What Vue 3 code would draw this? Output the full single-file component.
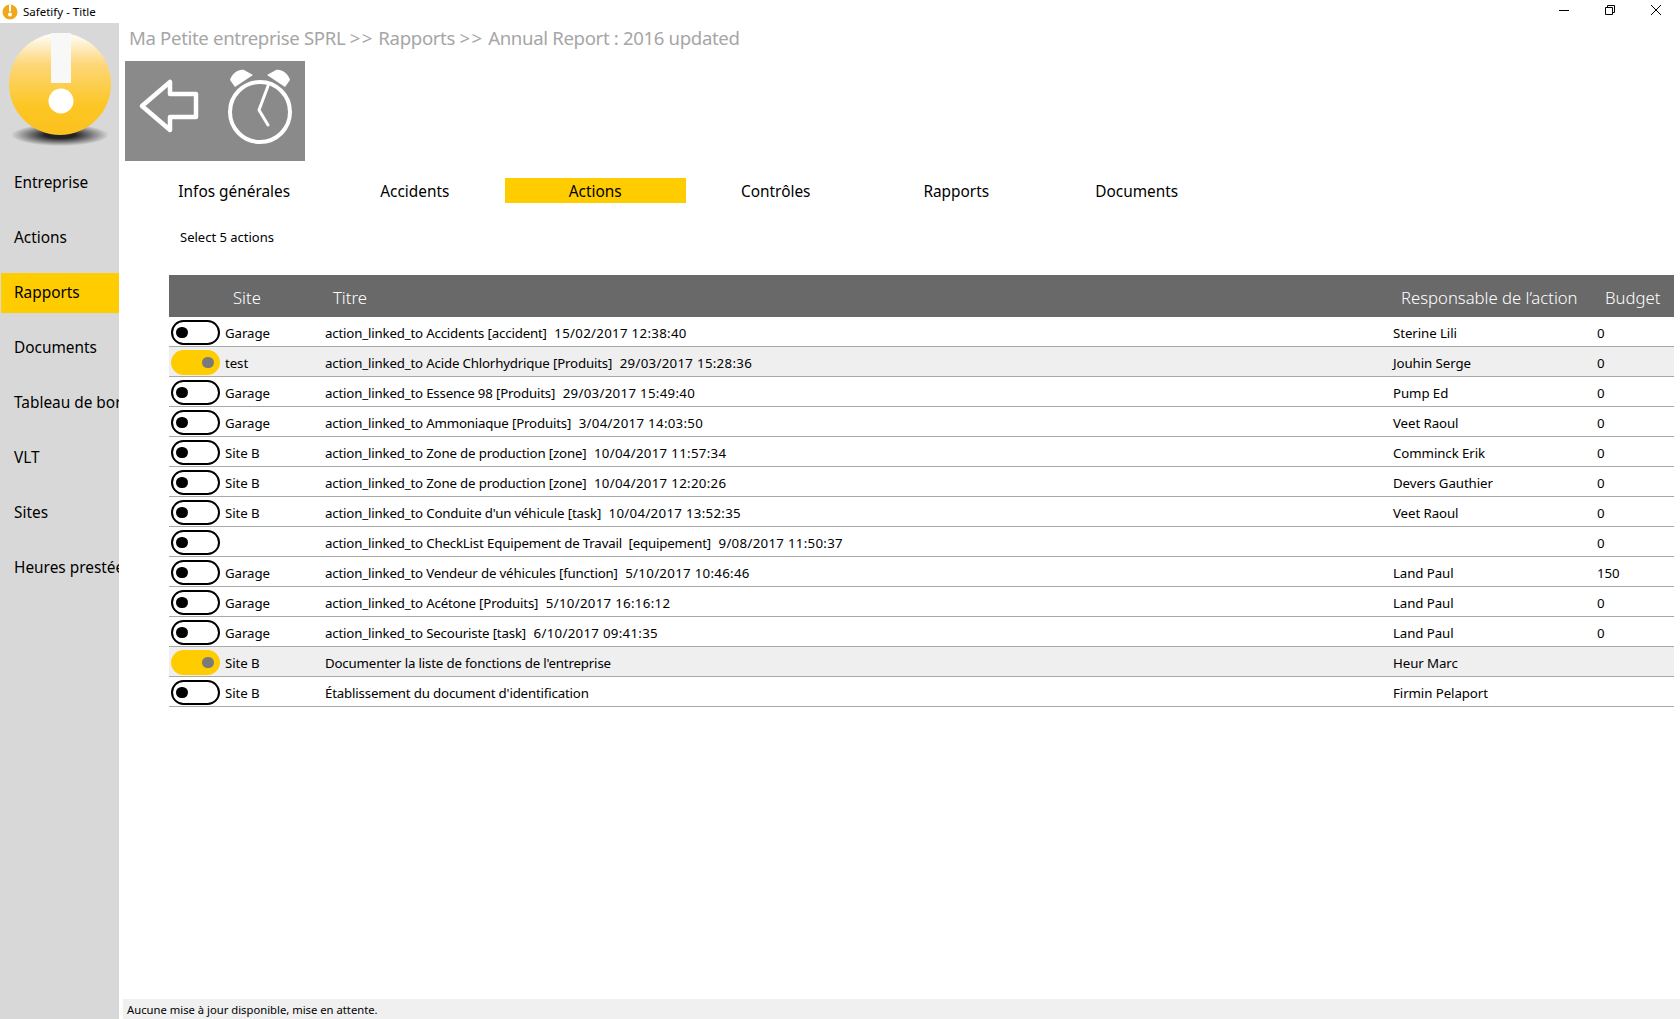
<template>
  <div class="window">
    <div class="titlebar">
      <svg class="titlebar__icon" width="16" height="16" viewBox="0 0 16 16">
        <circle cx="8" cy="8" r="7.5" fill="#f0a81a" />
        <rect x="7" y="0.5" width="2" height="7" fill="#fff" />
        <circle cx="8" cy="10.5" r="2" fill="#fff" />
      </svg>
      <span class="titlebar__text">Safetify - Title</span>
      <div class="titlebar__controls">
        <svg width="12" height="12" viewBox="0 0 12 12"><path d="M1 6.5h10" stroke="#000" fill="none" /></svg>
        <svg width="12" height="12" viewBox="0 0 12 12"><path d="M1.5 3.5h7v7h-7zM3.5 3.5v-2h7v7h-2" stroke="#000" fill="none" /></svg>
        <svg width="12" height="12" viewBox="0 0 12 12"><path d="M1 1l10 10M11 1L1 11" stroke="#000" fill="none" /></svg>
      </div>
    </div>

    <div class="body">
      <aside class="sidebar">
        <svg class="logo" width="118" height="125" viewBox="0 0 118 125">
          <defs>
            <linearGradient id="ball" x1="0" y1="0" x2="0" y2="1">
              <stop offset="0" stop-color="#fff" />
              <stop offset="0.3" stop-color="#fdd77a" />
              <stop offset="0.72" stop-color="#fcc623" />
              <stop offset="1" stop-color="#fcc01e" />
            </linearGradient>
            <radialGradient id="shade">
              <stop offset="0.3" stop-color="#222" />
              <stop offset="1" stop-color="#d8d8d8" />
            </radialGradient>
          </defs>
          <ellipse cx="60" cy="112" rx="49" ry="11" fill="url(#shade)" />
          <circle cx="60" cy="61" r="51" fill="url(#ball)" />
          <rect x="51" y="10" width="20" height="50" fill="#f8f8f8" />
          <circle cx="61" cy="78" r="12.5" fill="#fff" />
        </svg>
        <nav class="menu">
          <div
            v-for="item in menu"
            :key="item"
            class="menu__item"
            :class="{ 'menu__item--active': item === 'Rapports' }"
          >{{ item }}</div>
        </nav>
      </aside>

      <main class="main">
        <div class="breadcrumb">Ma Petite entreprise SPRL <span class="breadcrumb__sep">&gt;&gt;</span> Rapports <span class="breadcrumb__sep">&gt;&gt;</span> Annual Report : 2016 updated</div>
        <div class="toolbar">
          <svg width="180" height="100" viewBox="0 0 180 100">
            <path d="M17 45L45 21V33H71V56H45V69Z" fill="none" stroke="#fff" stroke-width="4.5" stroke-linejoin="round" />
            <circle cx="135" cy="51" r="30" fill="none" stroke="#fff" stroke-width="4" />
            <path d="M143 25L134 49L143 64" fill="none" stroke="#fff" stroke-width="3" stroke-linecap="round" stroke-linejoin="round" />
            <path d="M105 19C107 12 114 8 119 9L128 14L110 26Z" fill="#fff" />
            <path d="M165 19C163 12 156 8 151 9L142 14L160 26Z" fill="#fff" />
          </svg>
        </div>

        <div class="tabs">
          <div
            v-for="tab in tabs"
            :key="tab"
            class="tabs__item"
            :class="{ 'tabs__item--active': tab === 'Actions' }"
          >{{ tab }}</div>
        </div>

        <div class="selection">Select 5 actions</div>

        <div class="table">
          <div class="table__row table__row--head">
            <span></span>
            <span class="table__head">Site</span>
            <span class="table__head">Titre</span>
            <span class="table__head">Responsable de l’action</span>
            <span class="table__head">Budget</span>
          </div>
          <div
            v-for="(row, i) in rows"
            :key="i"
            class="table__row"
            :class="{ 'table__row--on': row.on }"
          >
            <span class="toggle" :class="{ 'toggle--on': row.on }"><i class="toggle__knob"></i></span>
            <span>{{ row.site }}</span>
            <span class="table__title">{{ row.title }}<span v-if="row.date" class="table__date">{{ '  ' + row.date }}</span></span>
            <span>{{ row.owner }}</span>
            <span>{{ row.budget }}</span>
          </div>
        </div>

        <div class="status">Aucune mise à jour disponible, mise en attente.</div>
      </main>
    </div>
  </div>
</template>

<script setup>
const menu = ['Entreprise', 'Actions', 'Rapports', 'Documents', 'Tableau de bord', 'VLT', 'Sites', 'Heures prestées']
const tabs = ['Infos générales', 'Accidents', 'Actions', 'Contrôles', 'Rapports', 'Documents']
const rows = [
  { site: 'Garage', title: 'action_linked_to Accidents [accident]', date: '15/02/2017 12:38:40', owner: 'Sterine Lili', budget: '0' },
  { site: 'test', title: 'action_linked_to Acide Chlorhydrique [Produits]', date: '29/03/2017 15:28:36', owner: 'Jouhin Serge', budget: '0', on: true },
  { site: 'Garage', title: 'action_linked_to Essence 98 [Produits]', date: '29/03/2017 15:49:40', owner: 'Pump Ed', budget: '0' },
  { site: 'Garage', title: 'action_linked_to Ammoniaque [Produits]', date: '3/04/2017 14:03:50', owner: 'Veet Raoul', budget: '0' },
  { site: 'Site B', title: 'action_linked_to Zone de production [zone]', date: '10/04/2017 11:57:34', owner: 'Comminck Erik', budget: '0' },
  { site: 'Site B', title: 'action_linked_to Zone de production [zone]', date: '10/04/2017 12:20:26', owner: 'Devers Gauthier', budget: '0' },
  { site: 'Site B', title: "action_linked_to Conduite d'un véhicule [task]", date: '10/04/2017 13:52:35', owner: 'Veet Raoul', budget: '0' },
  { site: '', title: 'action_linked_to CheckList Equipement de Travail  [equipement]', date: '9/08/2017 11:50:37', owner: '', budget: '0' },
  { site: 'Garage', title: 'action_linked_to Vendeur de véhicules [function]', date: '5/10/2017 10:46:46', owner: 'Land Paul', budget: '150' },
  { site: 'Garage', title: 'action_linked_to Acétone [Produits]', date: '5/10/2017 16:16:12', owner: 'Land Paul', budget: '0' },
  { site: 'Garage', title: 'action_linked_to Secouriste [task]', date: '6/10/2017 09:41:35', owner: 'Land Paul', budget: '0' },
  { site: 'Site B', title: "Documenter la liste de fonctions de l'entreprise", owner: 'Heur Marc', budget: '', on: true },
  { site: 'Site B', title: "Établissement du document d'identification", owner: 'Firmin Pelaport', budget: '' }
]
</script>

<style>
html, body {
  margin: 0;
  background: #fff;
}
</style>

<style scoped>
.window {
  width: 1680px;
  height: 1019px;
  display: flex;
  flex-direction: column;
  overflow: hidden;
  background: #fff;
  color: #000;
  font-family: "Noto Sans", "Open Sans", sans-serif;
}

.titlebar {
  height: 23px;
  display: flex;
  align-items: center;
  padding-left: 2px;
  font-size: 11.5px;
}

.titlebar__text {
  margin-left: 5px;
}

.titlebar__controls {
  margin-left: auto;
  display: flex;
  gap: 34px;
  padding-right: 18px;
  margin-top: -3px;
}

.body {
  flex: 1;
  display: flex;
  min-height: 0;
}

.sidebar {
  width: 119px;
  flex-shrink: 0;
  background: #d8d8d8;
  overflow: hidden;
}

.logo {
  display: block;
  height: 125px;
}

.menu {
  padding-left: 1px;
  margin-top: 15px;
}

.menu__item {
  height: 40px;
  line-height: 39px;
  margin-bottom: 15px;
  padding-left: 13px;
  font-size: 15.4px;
  white-space: nowrap;
}

.menu__item--active {
  background: #ffcc00;
}

.main {
  flex: 1;
  min-width: 0;
  display: flex;
  flex-direction: column;
  padding-left: 6px;
}

.breadcrumb {
  height: 38px;
  line-height: 30px;
  padding-left: 4px;
  font-size: 18.6px;
  letter-spacing: -0.34px;
  color: #a6a6a6;
  white-space: nowrap;
}

.breadcrumb__sep {
  letter-spacing: 1.4px;
}

.toolbar {
  width: 180px;
  height: 100px;
  background: #8a8a8a;
}

.toolbar svg {
  display: block;
}

.tabs {
  display: flex;
  margin-top: 17px;
  padding-left: 19px;
}

.tabs__item {
  width: 180.5px;
  height: 25px;
  line-height: 27px;
  text-align: center;
  font-size: 15.4px;
}

.tabs__item--active {
  background: #ffcc00;
}

.selection {
  margin-top: 23px;
  padding-left: 55px;
  height: 24px;
  line-height: 22px;
  font-size: 13px;
}

.table {
  margin-top: 25px;
  margin-left: 44px;
  width: 1505px;
}

.table__row {
  display: grid;
  grid-template-columns: 56px 100px 1068px 204px 77px;
  align-items: center;
  height: 30px;
  box-sizing: border-box;
  padding-top: 2px;
  border-bottom: 1px solid #a9a9a9;
  font-size: 13.28px;
  letter-spacing: -0.08px;
  white-space: nowrap;
}

.table__row--on {
  background: #efefef;
}

.table__row--head {
  height: 42px;
  background: #696969;
  border-bottom: 0;
  color: #fff;
  font-size: 16.7px;
  font-weight: 300;
  letter-spacing: 0;
}

.table__head {
  padding-left: 8px;
}

.table__title {
  white-space: pre;
  letter-spacing: -0.17px;
}

.table__date {
  letter-spacing: 0.3px;
}

.toggle {
  display: block;
  width: 49px;
  height: 25px;
  margin-left: 2px;
  box-sizing: border-box;
  border: 2.5px solid #000;
  border-radius: 13px;
  position: relative;
}

.toggle__knob {
  position: absolute;
  left: 3px;
  top: 4.5px;
  width: 11.5px;
  height: 11.5px;
  border-radius: 50%;
  background: #000;
}

.toggle--on {
  background: #ffcc00;
  border-color: #ffcc00;
}

.toggle--on .toggle__knob {
  left: 29px;
  background: #7a7a7a;
}

.status {
  margin-top: auto;
  margin-left: -2px;
  height: 20px;
  line-height: 22px;
  padding-left: 4px;
  font-size: 11.25px;
  background: #f0f0f0;
}
</style>
